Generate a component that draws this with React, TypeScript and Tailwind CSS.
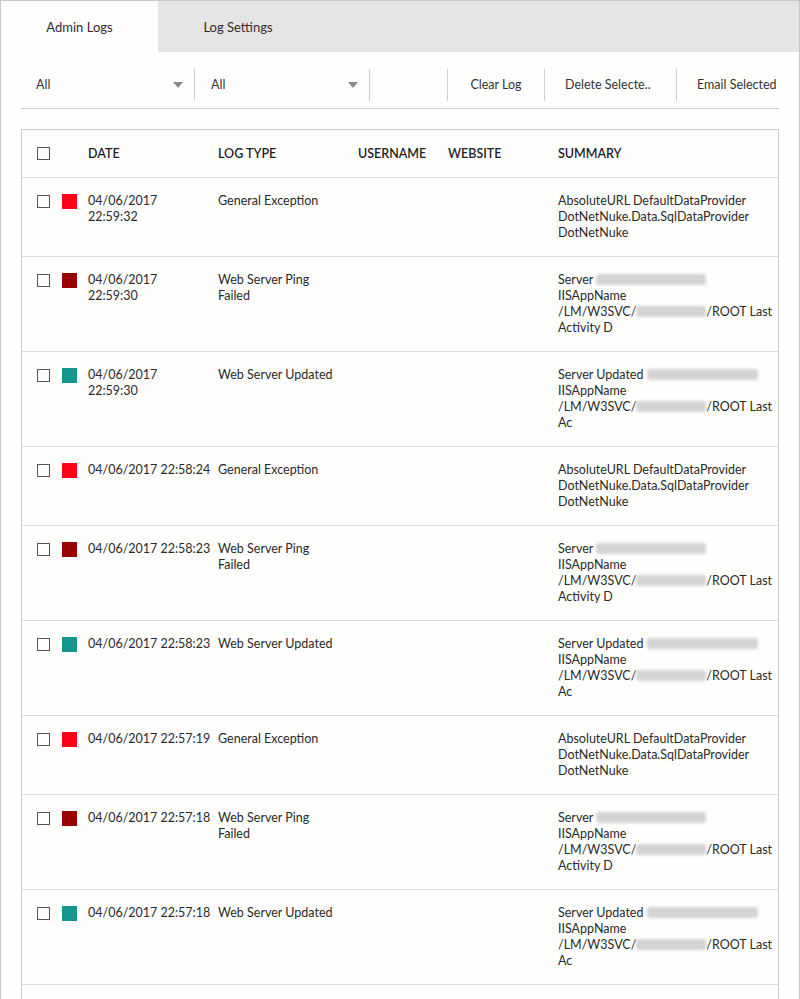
import React from "react";

type Row = {
  date: string[];
  type: string[];
  color: string;
  summary: React.ReactNode[];
};

const Blur = ({ w }: { w: number }) => (
  <span
    className="inline-block h-[11px] align-[-1px] rounded-[3px] bg-[#d3d3d3] blur-[1.5px]"
    style={{ width: w }}
  />
);

const exc = [
  "AbsoluteURL DefaultDataProvider",
  "DotNetNuke.Data.SqlDataProvider",
  "DotNetNuke",
];
const ping = [
  <>Server <Blur w={110} /></>,
  "IISAppName",
  <>/LM/W3SVC/<Blur w={70} />/ROOT Last</>,
  "Activity D",
];
const upd = [
  <>Server Updated <Blur w={111} /></>,
  "IISAppName",
  <>/LM/W3SVC/<Blur w={70} />/ROOT Last</>,
  "Ac",
];

const RED = "bg-[#ff0018]";
const DARK = "bg-[#990000]";
const TEAL = "bg-[#13968f]";

const rows: Row[] = [
  { date: ["04/06/2017", "22:59:32"], type: ["General Exception"], color: RED, summary: exc },
  { date: ["04/06/2017", "22:59:30"], type: ["Web Server Ping", "Failed"], color: DARK, summary: ping },
  { date: ["04/06/2017", "22:59:30"], type: ["Web Server Updated"], color: TEAL, summary: upd },
  { date: ["04/06/2017 22:58:24"], type: ["General Exception"], color: RED, summary: exc },
  { date: ["04/06/2017 22:58:23"], type: ["Web Server Ping", "Failed"], color: DARK, summary: ping },
  { date: ["04/06/2017 22:58:23"], type: ["Web Server Updated"], color: TEAL, summary: upd },
  { date: ["04/06/2017 22:57:19"], type: ["General Exception"], color: RED, summary: exc },
  { date: ["04/06/2017 22:57:18"], type: ["Web Server Ping", "Failed"], color: DARK, summary: ping },
  { date: ["04/06/2017 22:57:18"], type: ["Web Server Updated"], color: TEAL, summary: upd },
];

const Check = () => (
  <span className="block w-[13px] h-[13px] border border-[#555] bg-white" />
);

const Caret = () => (
  <svg width="10" height="6" viewBox="0 0 10 6" className="block">
    <path d="M0 0h10L5 6z" fill="#8a8a8a" />
  </svg>
);

const Sep = () => <span className="block w-px h-[32px] bg-[#cfcfcf]" />;

const grid = "grid grid-cols-[25px_26px_130px_140px_90px_110px_1fr] pl-[15px]";

export default function App() {
  return (
    <div
      className="w-[800px] h-[999px] overflow-hidden bg-[#fefefd] border-x border-t border-[#c8c8c8] text-[#2a2a2a] text-[12.5px] leading-[16px]"
      style={{ fontFamily: "Lato, 'Open Sans', sans-serif" }}
    >
      {/* tabs */}
      <div className="flex h-[51px] bg-[#e5e6e4]">
        <div className="w-[157px] bg-[#fefefd] flex items-center justify-center text-[13px] text-[#332a2e]">
          Admin Logs
        </div>
        <div className="w-[160px] flex items-center justify-center text-[13px] text-[#332a2e]">
          Log Settings
        </div>
      </div>

      {/* filter bar */}
      <div className="mx-[20px] mt-[17px] pb-[7px] border-b border-[#cfcfcf] flex items-center text-[#333]">
        <div className="w-[173px] flex items-center justify-between pl-[15px] pr-[11px]">
          <span>All</span>
          <Caret />
        </div>
        <Sep />
        <div className="w-[174px] flex items-center justify-between pl-[16px] pr-[11px]">
          <span>All</span>
          <Caret />
        </div>
        <Sep />
        <div className="w-[77px]" />
        <Sep />
        <div className="px-[20px] w-[96px] flex justify-center">Clear Log</div>
        <Sep />
        <div className="pl-[20px] pr-[19px] w-[131px]">Delete Selecte..</div>
        <Sep />
        <div className="pl-[20px] flex-1">Email Selected</div>
      </div>

      {/* table */}
      <div className="ml-[20px] mr-[20px] mt-[20px] border border-[#cfcfcf] bg-[#fefefd]">
        <div className={`${grid} h-[48px] items-center border-b border-[#d6d6d6] font-semibold text-[#1f1f1f]`}>
          <Check />
          <span />
          <span>DATE</span>
          <span>LOG TYPE</span>
          <span>USERNAME</span>
          <span>WEBSITE</span>
          <span>SUMMARY</span>
        </div>
        {rows.map((r, i) => (
          <div
            key={i}
            className={`${grid} pt-[15px] pb-[15px] border-b border-[#dcdcdc]`}
          >
            <div className="pt-[2px]">
              <Check />
            </div>
            <div className="pt-[1px]">
              <span className={`block w-[15px] h-[15px] ${r.color}`} />
            </div>
            <div>
              {r.date.map((d, j) => (
                <div key={j}>{d}</div>
              ))}
            </div>
            <div>
              {r.type.map((d, j) => (
                <div key={j}>{d}</div>
              ))}
            </div>
            <div />
            <div />
            <div className="whitespace-nowrap">
              {r.summary.map((d, j) => (
                <div key={j}>{d}</div>
              ))}
            </div>
          </div>
        ))}
        <div className="h-[40px]" />
      </div>
    </div>
  );
}
